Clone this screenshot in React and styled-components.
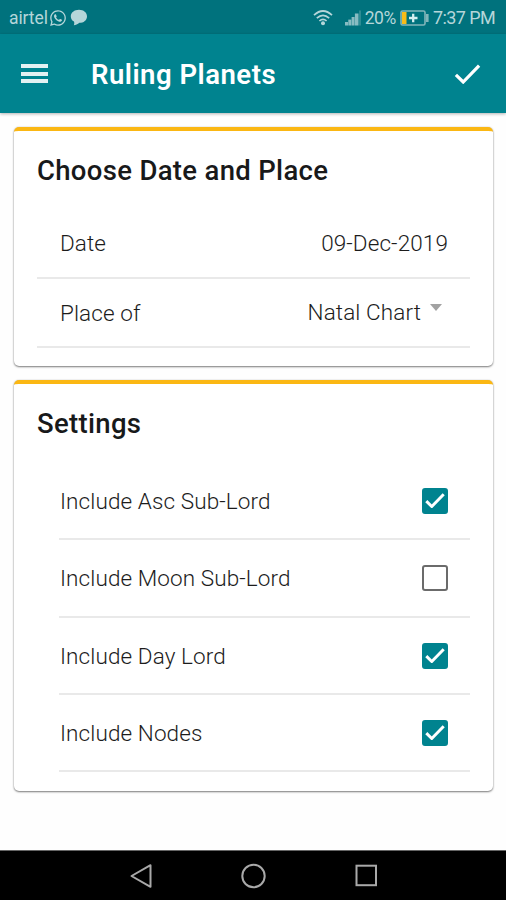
import { useState } from 'react'
import styled, { createGlobalStyle } from 'styled-components'
import { FaWhatsapp } from 'react-icons/fa'

const GlobalStyle = createGlobalStyle`
  * { box-sizing: border-box; }
  body {
    margin: 0;
    background: #fefefe;
    font-family: Roboto, 'Liberation Sans', sans-serif;
  }
`

const Screen = styled.div`
  width: 506px;
  height: 900px;
  display: flex;
  flex-direction: column;
  overflow: hidden;
`

const StatusBar = styled.div`
  height: 34px;
  flex: none;
  display: flex;
  align-items: center;
  justify-content: space-between;
  padding: 1px 11px 0 9px;
  background: #00727d;
  color: #b5d6d9;
`

const StatusGroup = styled.div`
  display: flex;
  align-items: center;
`

const StatusText = styled.span`
  font-size: ${({ $size }) => $size}px;
  line-height: 20px;
  letter-spacing: ${({ $spacing }) => $spacing || 0}px;
  margin-left: ${({ $gap }) => $gap || 0}px;
  white-space: nowrap;
`

const StatusIcon = styled.svg`
  display: block;
  margin-left: ${({ $gap }) => $gap || 0}px;
`

const WhatsappIcon = styled(FaWhatsapp)`
  width: 18px;
  height: 18px;
  margin-left: 1px;
`

const AppBar = styled.header`
  height: 79px;
  flex: none;
  display: flex;
  align-items: center;
  padding: 0 25px 0 21px;
  background: #00838f;
  color: #fff;
  box-shadow: 0 1px 3px rgba(0, 0, 0, 0.3);
`

const MenuButton = styled.button`
  width: 27px;
  height: 19px;
  padding: 0;
  border: 0;
  background: none;
  display: flex;
  flex-direction: column;
  justify-content: space-between;
`

const MenuLine = styled.span`
  width: 27px;
  height: 4px;
  background: #e3f1f2;
`

const PageTitle = styled.h1`
  flex: 1;
  margin: 0 0 0 43px;
  padding-top: 2px;
  font-size: 27.5px;
  line-height: 32px;
  font-weight: 600;
  letter-spacing: 0.5px;
`

const DoneButton = styled.button`
  padding: 0;
  border: 0;
  background: none;
  color: #fff;
  display: flex;
`

const Content = styled.main`
  flex: 1;
  display: flex;
  flex-direction: column;
  gap: 14px;
  padding: 14px 13px 0 14px;
`

const Card = styled.section`
  height: ${({ $height }) => $height}px;
  padding: 0 23px;
  border-top: 4px solid #fbb713;
  border-radius: 5px;
  background: #fff;
  box-shadow: 0 1px 2px rgba(0, 0, 0, 0.5), 0 0 2px rgba(0, 0, 0, 0.12);
`

const CardTitle = styled.h2`
  margin: 0;
  padding-top: 24px;
  height: ${({ $height }) => $height}px;
  font-size: 27.5px;
  line-height: 32px;
  font-weight: 500;
  letter-spacing: 0.32px;
  color: #18191a;
`

const Row = styled.div`
  height: ${({ $height }) => $height}px;
  margin-left: ${({ $inset }) => ($inset ? 22 : 0)}px;
  padding: 0 22px 0 ${({ $inset }) => ($inset ? 1 : 23)}px;
  display: flex;
  align-items: center;
  justify-content: space-between;
  border-bottom: 2px solid #e9e9e9;
`

const RowLabel = styled.span`
  font-size: 22.5px;
  line-height: 28px;
  font-weight: 360;
  letter-spacing: 0.1px;
  color: #1c1c1c;
  white-space: nowrap;
`

const RowValue = styled(RowLabel)`
  padding-bottom: 1px;
`

const SelectValue = styled.div`
  display: flex;
  align-items: center;
  gap: 9px;
  padding-right: 6px;
`

const Caret = styled.span`
  border: 6.5px solid transparent;
  border-top: 7px solid #a2a2a2;
  border-bottom: 0;
  margin-bottom: 10px;
`

const CheckButton = styled.button`
  width: 26px;
  height: 26px;
  padding: 0;
  display: flex;
  align-items: center;
  justify-content: center;
  border: 2px solid ${({ $on }) => ($on ? '#00838f' : '#6b6b6b')};
  border-radius: 3px;
  background: ${({ $on }) => ($on ? '#00838f' : '#fff')};
  color: #fff;
`

const NavBar = styled.nav`
  height: 50px;
  flex: none;
  display: flex;
  align-items: center;
  justify-content: center;
  gap: 88px;
  background: #000;
  border-top: 1px solid #666;
  color: #a9a9a9;
`

const SETTINGS = [
  { label: 'Include Asc Sub-Lord', on: true, height: 77 },
  { label: 'Include Moon Sub-Lord', on: false, height: 78 },
  { label: 'Include Day Lord', on: true, height: 77 },
  { label: 'Include Nodes', on: true, height: 77 },
]

function Tick({ width, height, stroke }) {
  return (
    <svg width={width} height={height} viewBox="0 0 26 20" fill="none" stroke="currentColor" strokeWidth={stroke}>
      <path d="M1.4 10.8 L8.7 18 L24.6 1.6" />
    </svg>
  )
}

function Wifi() {
  return (
    <StatusIcon width="20" height="17" viewBox="0 0 20 17" fill="none" stroke="currentColor" strokeWidth="1.7">
      <path d="M1 6.2 Q10 -2.2 19 6.2" />
      <path d="M3.8 9.2 Q10 3.4 16.2 9.2" />
      <path d="M6.4 12 Q10 8.6 13.6 12" />
      <circle cx="10" cy="14.3" r="2" fill="currentColor" stroke="none" />
    </StatusIcon>
  )
}

function Signal() {
  return (
    <StatusIcon $gap={12} width="17" height="16" viewBox="0 0 17 16" fill="currentColor">
      <rect x="0" y="12" width="3" height="3.5" opacity=".75" />
      <rect x="3.3" y="9.6" width="3" height="5.9" opacity=".75" />
      <rect x="6.6" y="7" width="3" height="8.5" opacity=".75" />
      <rect x="9.9" y="3.5" width="3.6" height="12" opacity=".75" />
      <rect x="14" y="0.5" width="2" height="15" opacity=".25" />
    </StatusIcon>
  )
}

function Battery() {
  return (
    <StatusIcon $gap={4} width="29" height="16" viewBox="0 0 29 16" fill="none">
      <rect x="1" y="1" width="24" height="14" rx="1.5" stroke="#82b6ba" strokeWidth="1.6" />
      <rect x="2" y="2" width="4.5" height="12" fill="#f9bb18" />
      <path d="M9 8h8.5M13.2 3.8v8.4" stroke="#d5eef0" strokeWidth="2.3" />
      <rect x="26" y="4" width="2.6" height="8" fill="#82b6ba" />
    </StatusIcon>
  )
}

export default function App() {
  const [settings, setSettings] = useState(SETTINGS)

  const toggle = (label) => {
    setSettings(settings.map((s) => (s.label === label ? { ...s, on: !s.on } : s)))
  }

  return (
    <Screen>
      <GlobalStyle />
      <StatusBar>
        <StatusGroup>
          <StatusText $size={17.5} $spacing={-0.1}>airtel</StatusText>
          <WhatsappIcon />
          <StatusIcon $gap={3} width="18" height="17" viewBox="0 0 18 17" fill="currentColor">
            <path d="M9 0.8 C13.6 0.8 17 3.6 17 7.4 C17 11.2 13.6 13.8 9.4 13.8 C7.6 15.4 5.6 16.2 3.8 16.2 C4.4 15 4.4 13.8 4 12.6 C2 11.4 .8 9.6 .8 7.4 C.8 3.6 4.4 .8 9 .8 Z" />
          </StatusIcon>
        </StatusGroup>
        <StatusGroup>
          <Wifi />
          <Signal />
          <StatusText $size={17.5} $gap={3} $spacing={-0.4}>20%</StatusText>
          <Battery />
          <StatusText $size={18} $gap={4} $spacing={-0.6}>7:37 PM</StatusText>
        </StatusGroup>
      </StatusBar>

      <AppBar>
        <MenuButton aria-label="Menu">
          <MenuLine />
          <MenuLine />
          <MenuLine />
        </MenuButton>
        <PageTitle>Ruling Planets</PageTitle>
        <DoneButton aria-label="Done">
          <Tick width={27} height={20} stroke={3.2} />
        </DoneButton>
      </AppBar>

      <Content>
        <Card $height={239}>
          <CardTitle $height={78}>Choose Date and Place</CardTitle>
          <Row $height={70}>
            <RowLabel>Date</RowLabel>
            <RowValue>09-Dec-2019</RowValue>
          </Row>
          <Row $height={69}>
            <RowLabel>Place of</RowLabel>
            <SelectValue>
              <RowValue>Natal Chart</RowValue>
              <Caret />
            </SelectValue>
          </Row>
        </Card>

        <Card $height={411}>
          <CardTitle $height={79}>Settings</CardTitle>
          {settings.map((s) => (
            <Row key={s.label} $height={s.height} $inset>
              <RowLabel>{s.label}</RowLabel>
              <CheckButton $on={s.on} aria-label={s.label} onClick={() => toggle(s.label)}>
                {s.on && <Tick width={20} height={15} stroke={3.9} />}
              </CheckButton>
            </Row>
          ))}
        </Card>
      </Content>

      <NavBar>
        <svg width="24" height="26" viewBox="0 0 24 26" fill="none" stroke="currentColor" strokeWidth="2" strokeLinejoin="round">
          <path d="M3.5 13 L22.5 2.2 V23.8 Z" />
        </svg>
        <svg width="26" height="26" viewBox="0 0 26 26" fill="none" stroke="currentColor" strokeWidth="2">
          <circle cx="13.5" cy="13" r="11.2" />
        </svg>
        <svg width="24" height="24" viewBox="0 0 24 24" fill="none" stroke="currentColor" strokeWidth="2">
          <rect x="2.5" y="1.7" width="19.5" height="19.5" />
        </svg>
      </NavBar>
    </Screen>
  )
}
